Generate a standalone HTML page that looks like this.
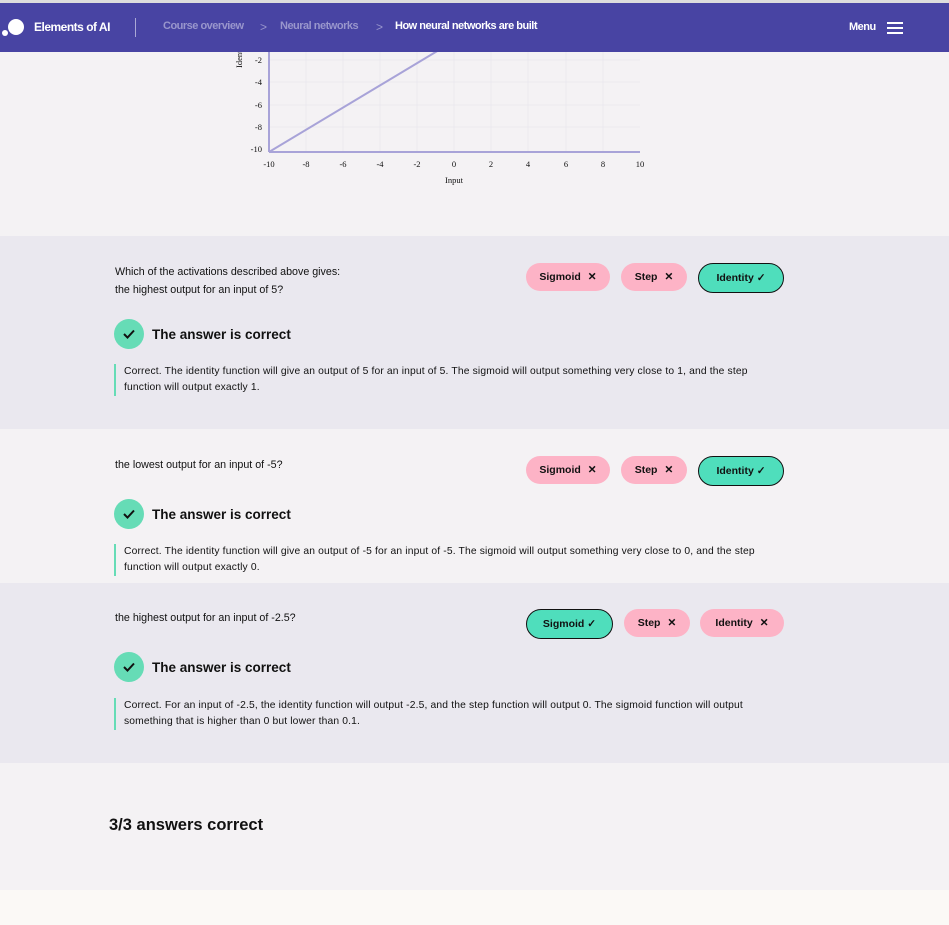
<!DOCTYPE html>
<html><head><meta charset="utf-8"><style>
*{margin:0;padding:0;box-sizing:border-box}
body{width:949px;height:925px;overflow:hidden;background:#f4f2f4;font-family:"Liberation Sans",sans-serif;color:#111;position:relative}
.sec{position:absolute;left:0;width:949px}
.hdr{position:absolute;top:3px;left:0;width:949px;height:49px;background:#4844a3;color:#fff;font-weight:bold;font-size:12px;z-index:5}
.hdr span{position:absolute;top:17px;letter-spacing:-0.5px}
.q{position:absolute;left:115px;font-size:10.7px;line-height:18px}
.pill{position:absolute;height:28px;border-radius:14px;font-size:10.5px;font-weight:bold;display:flex;align-items:center;justify-content:center;gap:7px}
.pk{background:#fdb3c6}
.gr{background:#4fdebc;border:1.3px solid #111;height:30px;border-radius:15px}
.ok{position:absolute;left:114px;display:flex;align-items:center;gap:8px;font-weight:bold;font-size:13.5px}
.ok i{width:30px;height:30px;border-radius:50%;background:#66dcb6;display:flex;align-items:center;justify-content:center}
.fb{position:absolute;left:114px;width:668px;border-left:2px solid #66dcb6;padding-left:8px;font-size:10.3px;line-height:16px;letter-spacing:0.15px}
</style></head><body>
<div style="position:absolute;top:0;left:0;width:949px;height:3px;background:#ddd"></div>
<div class="hdr">
<div style="position:absolute;left:2px;top:27px;width:6px;height:6px;border-radius:50%;background:#fff"></div>
<div style="position:absolute;left:8px;top:16px;width:16px;height:16px;border-radius:50%;background:#fff"></div>
<span style="left:34px">Elements of AI</span>
<div style="position:absolute;left:135px;top:15px;width:1px;height:19px;background:#aaa9d6"></div>
<span style="left:163px;color:#9996cc;font-size:11px">Course overview</span>
<span style="left:260px;color:#9996cc;font-weight:normal">&gt;</span>
<span style="left:280px;color:#9996cc;font-size:11px">Neural networks</span>
<span style="left:376px;color:#9996cc;font-weight:normal">&gt;</span>
<span style="left:395px;font-size:11px">How neural networks are built</span>
<span style="left:849px;font-size:11px;top:18px">Menu</span>
<div style="position:absolute;left:887px;top:19px;width:16px;height:2px;background:#fff;box-shadow:0 5px 0 #fff,0 10px 0 #fff"></div>
</div>
<svg style="position:absolute;left:225px;top:40px" width="440" height="150" font-family="Liberation Serif" font-size="8.5" fill="#111">
<g stroke="#ebe9ee" stroke-width="1">
<line x1="44" y1="20" x2="415" y2="20"/><line x1="44" y1="42" x2="415" y2="42"/><line x1="44" y1="65" x2="415" y2="65"/><line x1="44" y1="87" x2="415" y2="87"/>
<line x1="81" y1="10" x2="81" y2="112"/><line x1="118" y1="10" x2="118" y2="112"/><line x1="155" y1="10" x2="155" y2="112"/><line x1="192" y1="10" x2="192" y2="112"/><line x1="229" y1="10" x2="229" y2="112"/><line x1="266" y1="10" x2="266" y2="112"/><line x1="303" y1="10" x2="303" y2="112"/><line x1="341" y1="10" x2="341" y2="112"/><line x1="378" y1="10" x2="378" y2="112"/>
</g>
<g stroke="#a8a3d8" stroke-width="2"><line x1="44" y1="10" x2="44" y2="112"/><line x1="44" y1="112" x2="415" y2="112"/><line x1="44" y1="112" x2="214" y2="10"/></g>
<g text-anchor="end"><text x="37" y="23">-2</text><text x="37" y="45">-4</text><text x="37" y="68">-6</text><text x="37" y="90">-8</text><text x="37" y="112">-10</text></g>
<g text-anchor="middle"><text x="44" y="127">-10</text><text x="81" y="127">-8</text><text x="118" y="127">-6</text><text x="155" y="127">-4</text><text x="192" y="127">-2</text><text x="229" y="127">0</text><text x="266" y="127">2</text><text x="303" y="127">4</text><text x="341" y="127">6</text><text x="378" y="127">8</text><text x="415" y="127">10</text>
<text x="229" y="143">Input</text></g>
<text transform="translate(17,28) rotate(-90)">Ident</text>
</svg>
<div class="sec" style="top:236px;height:193px;background:#eae8ef"></div>
<div class="sec" style="top:583px;height:180px;background:#eae8ef"></div>
<div class="sec" style="top:890px;height:35px;background:#fbf9f6"></div>

<div class="q" style="top:263px">Which of the activations described above gives:<br>the highest output for an input of 5?</div>
<div class="pill pk" style="left:526px;top:263px;width:84px">Sigmoid <b>✕</b></div>
<div class="pill pk" style="left:621px;top:263px;width:66px">Step <b>✕</b></div>
<div class="pill gr" style="left:698px;top:263px;width:86px">Identity ✓</div>
<div class="ok" style="top:319px"><i><svg width="14" height="12" viewBox="0 0 14 12"><path d="M2 6l3.5 3.5L12 2.5" fill="none" stroke="#111" stroke-width="2"/></svg></i>The answer is correct</div>
<div class="fb" style="top:364px">Correct. The identity function will give an output of 5 for an input of 5. The sigmoid will output something very close to 1, and the step function will output exactly 1.</div>

<div class="q" style="top:456px">the lowest output for an input of -5?</div>
<div class="pill pk" style="left:526px;top:456px;width:84px">Sigmoid <b>✕</b></div>
<div class="pill pk" style="left:621px;top:456px;width:66px">Step <b>✕</b></div>
<div class="pill gr" style="left:698px;top:456px;width:86px">Identity ✓</div>
<div class="ok" style="top:499px"><i><svg width="14" height="12" viewBox="0 0 14 12"><path d="M2 6l3.5 3.5L12 2.5" fill="none" stroke="#111" stroke-width="2"/></svg></i>The answer is correct</div>
<div class="fb" style="top:544px">Correct. The identity function will give an output of -5 for an input of -5. The sigmoid will output something very close to 0, and the step function will output exactly 0.</div>

<div class="q" style="top:609px">the highest output for an input of -2.5?</div>
<div class="pill gr" style="left:526px;top:609px;width:87px">Sigmoid ✓</div>
<div class="pill pk" style="left:624px;top:609px;width:66px">Step <b>✕</b></div>
<div class="pill pk" style="left:700px;top:609px;width:84px">Identity <b>✕</b></div>
<div class="ok" style="top:652px"><i><svg width="14" height="12" viewBox="0 0 14 12"><path d="M2 6l3.5 3.5L12 2.5" fill="none" stroke="#111" stroke-width="2"/></svg></i>The answer is correct</div>
<div class="fb" style="top:698px">Correct. For an input of -2.5, the identity function will output -2.5, and the step function will output 0. The sigmoid function will output something that is higher than 0 but lower than 0.1.</div>

<div style="position:absolute;left:109px;top:816px;font-weight:bold;font-size:16.5px">3/3 answers correct</div>
</body></html>
